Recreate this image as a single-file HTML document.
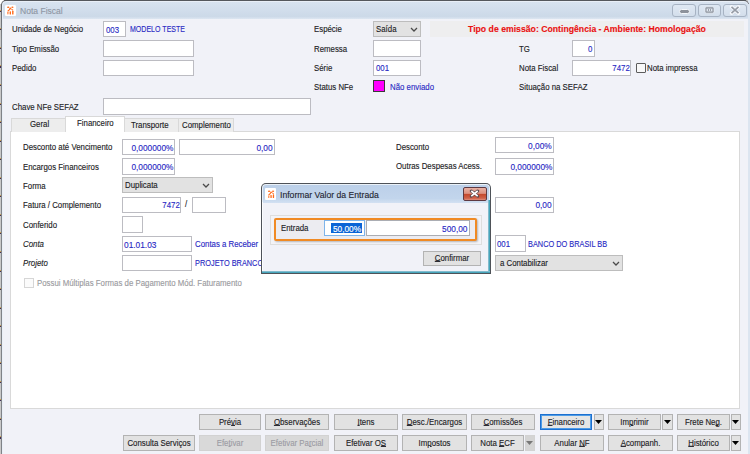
<!DOCTYPE html>
<html><head><meta charset="utf-8">
<style>
*{box-sizing:border-box;margin:0;padding:0}
html,body{width:750px;height:454px;overflow:hidden;background:#f0f0f7;font-family:"Liberation Sans",sans-serif}
.a{position:absolute}
.t{position:absolute;white-space:nowrap;font-family:"Liberation Sans",sans-serif;-webkit-text-stroke:0.12px currentColor}
</style></head><body>
<div class="a" style="left:0px;top:0px;width:750px;height:454px;background:#c9c9c9"></div>
<div class="a" style="left:0px;top:0px;width:4px;height:4px;background:#fff"></div>
<div class="a" style="left:748px;top:0px;width:2px;height:454px;background:#dfe7f1"></div>
<div class="a" style="left:0;top:9.8px;width:1.5px;height:1px;background:#c8a050"></div><div class="a" style="left:0;top:10.8px;width:1.5px;height:1.2px;background:#40305a"></div>
<div class="a" style="left:0;top:28.3px;width:1.5px;height:1px;background:#c8a050"></div><div class="a" style="left:0;top:29.3px;width:1.5px;height:1.2px;background:#40305a"></div>
<div class="a" style="left:0;top:46.8px;width:1.5px;height:1px;background:#c8a050"></div><div class="a" style="left:0;top:47.8px;width:1.5px;height:1.2px;background:#40305a"></div>
<div class="a" style="left:0;top:65.4px;width:1.5px;height:1px;background:#c8a050"></div><div class="a" style="left:0;top:66.4px;width:1.5px;height:1.2px;background:#40305a"></div>
<div class="a" style="left:0;top:84.0px;width:1.5px;height:1px;background:#c8a050"></div><div class="a" style="left:0;top:85.0px;width:1.5px;height:1.2px;background:#40305a"></div>
<div class="a" style="left:0;top:102.5px;width:1.5px;height:1px;background:#c8a050"></div><div class="a" style="left:0;top:103.5px;width:1.5px;height:1.2px;background:#40305a"></div>
<div class="a" style="left:0;top:121.0px;width:1.5px;height:1px;background:#c8a050"></div><div class="a" style="left:0;top:122.0px;width:1.5px;height:1.2px;background:#40305a"></div>
<div class="a" style="left:0;top:139.6px;width:1.5px;height:1px;background:#c8a050"></div><div class="a" style="left:0;top:140.6px;width:1.5px;height:1.2px;background:#40305a"></div>
<div class="a" style="left:0;top:158.2px;width:1.5px;height:1px;background:#c8a050"></div><div class="a" style="left:0;top:159.2px;width:1.5px;height:1.2px;background:#40305a"></div>
<div class="a" style="left:0;top:176.7px;width:1.5px;height:1px;background:#c8a050"></div><div class="a" style="left:0;top:177.7px;width:1.5px;height:1.2px;background:#40305a"></div>
<div class="a" style="left:0;top:195.2px;width:1.5px;height:1px;background:#c8a050"></div><div class="a" style="left:0;top:196.2px;width:1.5px;height:1.2px;background:#40305a"></div>
<div class="a" style="left:0;top:213.8px;width:1.5px;height:1px;background:#c8a050"></div><div class="a" style="left:0;top:214.8px;width:1.5px;height:1.2px;background:#40305a"></div>
<div class="a" style="left:0;top:232.3px;width:1.5px;height:1px;background:#c8a050"></div><div class="a" style="left:0;top:233.3px;width:1.5px;height:1.2px;background:#40305a"></div>
<div class="a" style="left:0;top:250.9px;width:1.5px;height:1px;background:#c8a050"></div><div class="a" style="left:0;top:251.9px;width:1.5px;height:1.2px;background:#40305a"></div>
<div class="a" style="left:0;top:269.5px;width:1.5px;height:1px;background:#c8a050"></div><div class="a" style="left:0;top:270.5px;width:1.5px;height:1.2px;background:#40305a"></div>
<div class="a" style="left:0;top:288.0px;width:1.5px;height:1px;background:#c8a050"></div><div class="a" style="left:0;top:289.0px;width:1.5px;height:1.2px;background:#40305a"></div>
<div class="a" style="left:0;top:306.6px;width:1.5px;height:1px;background:#c8a050"></div><div class="a" style="left:0;top:307.6px;width:1.5px;height:1.2px;background:#40305a"></div>
<div class="a" style="left:0;top:325.1px;width:1.5px;height:1px;background:#c8a050"></div><div class="a" style="left:0;top:326.1px;width:1.5px;height:1.2px;background:#40305a"></div>
<div class="a" style="left:0;top:343.6px;width:1.5px;height:1px;background:#c8a050"></div><div class="a" style="left:0;top:344.6px;width:1.5px;height:1.2px;background:#40305a"></div>
<div class="a" style="left:0;top:362.2px;width:1.5px;height:1px;background:#c8a050"></div><div class="a" style="left:0;top:363.2px;width:1.5px;height:1.2px;background:#40305a"></div>
<div class="a" style="left:0;top:380.8px;width:1.5px;height:1px;background:#c8a050"></div><div class="a" style="left:0;top:381.8px;width:1.5px;height:1.2px;background:#40305a"></div>
<div class="a" style="left:0;top:399.3px;width:1.5px;height:1px;background:#c8a050"></div><div class="a" style="left:0;top:400.3px;width:1.5px;height:1.2px;background:#40305a"></div>
<div class="a" style="left:0;top:417.9px;width:1.5px;height:1px;background:#c8a050"></div><div class="a" style="left:0;top:418.9px;width:1.5px;height:1.2px;background:#40305a"></div>
<div class="a" style="left:0;top:436.4px;width:1.5px;height:1px;background:#c8a050"></div><div class="a" style="left:0;top:437.4px;width:1.5px;height:1.2px;background:#40305a"></div>
<div class="a" style="left:1px;top:0px;width:748px;height:454px;background:linear-gradient(#5c5f64,#6a6d72 12px,#808388 40px);border-radius:5px 5px 0 0"></div>
<div class="a" style="left:4px;top:0px;width:742px;height:1px;background:#55585d"></div>
<div class="a" style="left:2px;top:1px;width:746px;height:453px;background:#e9eff7;border-radius:4px 4px 0 0"></div>
<div class="a" style="left:748px;top:4px;width:2px;height:450px;background:#dce5f0"></div>
<div class="a" style="left:3px;top:2px;width:745px;height:452px;background:#f1f2f8;border-radius:3px 3px 0 0"></div>
<div class="a" style="left:3px;top:2px;width:745px;height:17px;background:linear-gradient(#d8e3f0,#ccd9e8 85%,#dde6f1);border-radius:3px 3px 0 0"></div>
<div class="a" style="left:5px;top:5px;width:11px;height:11px;background:#fff;border-radius:1.5px;box-shadow:0 0 1px rgba(255,255,255,.8)"></div>
<svg class="a" style="left:5px;top:5px" width="11" height="11" viewBox="0 0 11 11"><g fill="#ff6a1a"><ellipse cx="3.2" cy="2.3" rx="1.2" ry="0.8"/><ellipse cx="7.4" cy="2.3" rx="1.1" ry="0.8"/><ellipse cx="5.3" cy="3.4" rx="1" ry="0.9"/><path d="M4.6 3.8 L2.2 6 L3.4 6.6 L5.4 4.6Z"/><path d="M6 4.2 L7.8 5.6 L8.3 4.8 L6.6 3.7Z"/><rect x="2.2" y="6.6" width="1.4" height="2.8" rx="0.6" fill-opacity=".75"/><rect x="4.6" y="6.2" width="1.4" height="3.3" rx="0.6"/><rect x="7.1" y="5.6" width="1.4" height="3.9" rx="0.6"/></g></svg>
<span class="t" style="left:19.50px;top:6.60px;font-size:9px;line-height:9px;color:#8e96a4;transform:scaleX(0.95);transform-origin:0 0;">Nota Fiscal</span>
<div class="a" style="left:672px;top:4px;width:24px;height:13px;background:linear-gradient(#dfe8f3,#d3deeb);border:1px solid #a7b3c3;border-radius:3px"></div>
<div class="a" style="left:698px;top:4px;width:23px;height:13px;background:linear-gradient(#dfe8f3,#d3deeb);border:1px solid #a7b3c3;border-radius:3px"></div>
<div class="a" style="left:723px;top:4px;width:24px;height:13px;background:linear-gradient(#dfe8f3,#d3deeb);border:1px solid #a7b3c3;border-radius:3px"></div>
<svg class="a" style="left:678px;top:8px" width="13" height="7" viewBox="0 0 13 7"><rect x="1.5" y="1.5" width="10" height="4" rx="2" fill="#8d929b" stroke="#f4f7fb" stroke-width="1"/></svg>
<svg class="a" style="left:704px;top:6px" width="11" height="8" viewBox="0 0 11 8"><rect x="1" y="0.8" width="9" height="6.4" rx="1.6" fill="#939aa4" stroke="#eef2f8" stroke-width="0.6"/><rect x="2.6" y="2.6" width="5.8" height="2.8" fill="#dfe5ee"/><rect x="4" y="3.4" width="1" height="1.2" fill="#707580"/><rect x="6" y="3.4" width="1" height="1.2" fill="#707580"/></svg>
<svg class="a" style="left:729px;top:5px" width="12" height="10" viewBox="0 0 12 10"><path d="M2.5 1.8 L9.5 8.2 M9.5 1.8 L2.5 8.2" stroke="#f6f8fb" stroke-width="3.4" stroke-linecap="round"/><path d="M2.5 1.8 L9.5 8.2 M9.5 1.8 L2.5 8.2" stroke="#959ba5" stroke-width="1.6"/></svg>
<span class="t" style="left:12.00px;top:25.00px;font-size:8.0px;line-height:8.0px;color:#1c1c24;transform:scale(0.98,1.13);transform-origin:0 0;">Unidade de Negócio</span>
<div class="a" style="left:103px;top:21px;width:23px;height:16px;background:#fff;border:1px solid #bcbcc2;"></div>
<span class="t" style="left:105.60px;top:25.50px;font-size:8.0px;line-height:8.0px;color:#2a2ac4;transform:scale(0.98,1.13);transform-origin:0 0;">003</span>
<span class="t" style="left:130.00px;top:25.00px;font-size:8.0px;line-height:8.0px;color:#2a2ac4;transform:scale(0.88,1.13);transform-origin:0 0;">MODELO TESTE</span>
<span class="t" style="left:12.00px;top:44.60px;font-size:8.0px;line-height:8.0px;color:#1c1c24;transform:scale(0.98,1.13);transform-origin:0 0;">Tipo Emissão</span>
<div class="a" style="left:103px;top:40px;width:91px;height:17px;background:#fff;border:1px solid #bcbcc2;"></div>
<span class="t" style="left:12.00px;top:64.00px;font-size:8.0px;line-height:8.0px;color:#1c1c24;transform:scale(0.98,1.13);transform-origin:0 0;">Pedido</span>
<div class="a" style="left:103px;top:60px;width:91px;height:16px;background:#fff;border:1px solid #bcbcc2;"></div>
<span class="t" style="left:12.00px;top:102.75px;font-size:8.0px;line-height:8.0px;color:#1c1c24;transform:scale(0.98,1.13);transform-origin:0 0;">Chave NFe SEFAZ</span>
<div class="a" style="left:103px;top:98px;width:208px;height:17px;background:#fff;border:1px solid #bcbcc2;"></div>
<span class="t" style="left:314.00px;top:25.00px;font-size:8.0px;line-height:8.0px;color:#1c1c24;transform:scale(0.98,1.13);transform-origin:0 0;">Espécie</span>
<div class="a" style="left:373px;top:21px;width:48px;height:16px;background:#e2e2e2;border:1px solid #bdbdbd;"></div>
<span class="t" style="left:375.80px;top:25.00px;font-size:8.0px;line-height:8.0px;color:#1c1c24;transform:scale(0.98,1.13);transform-origin:0 0;">Saída</span>
<svg class="a" style="left:410.2px;top:26.7px" width="8" height="5.0"><polyline points="1,1 4.0,4.0 7,1" fill="none" stroke="#4a4a4a" stroke-width="1.25"/></svg>
<span class="t" style="left:314.00px;top:44.60px;font-size:8.0px;line-height:8.0px;color:#1c1c24;transform:scale(0.98,1.13);transform-origin:0 0;">Remessa</span>
<div class="a" style="left:373px;top:40px;width:48px;height:17px;background:#fff;border:1px solid #bcbcc2;"></div>
<span class="t" style="left:314.00px;top:64.00px;font-size:8.0px;line-height:8.0px;color:#1c1c24;transform:scale(0.98,1.13);transform-origin:0 0;">Série</span>
<div class="a" style="left:373px;top:60px;width:48px;height:16px;background:#fff;border:1px solid #bcbcc2;"></div>
<span class="t" style="left:375.80px;top:64.20px;font-size:8.0px;line-height:8.0px;color:#2a2ac4;transform:scale(0.98,1.13);transform-origin:0 0;">001</span>
<span class="t" style="left:314.00px;top:83.00px;font-size:8.0px;line-height:8.0px;color:#1c1c24;transform:scale(0.98,1.13);transform-origin:0 0;">Status NFe</span>
<div class="a" style="left:373px;top:80px;width:12px;height:12px;background:#ff00ff;border:1px solid #3a3a3a"></div>
<span class="t" style="left:389.50px;top:83.00px;font-size:8.0px;line-height:8.0px;color:#2a2ac4;transform:scale(0.98,1.13);transform-origin:0 0;">Não enviado</span>
<div class="a" style="left:430px;top:21px;width:314px;height:16px;background:#eeeeef"></div>
<span class="t" style="left:467.60px;top:25.00px;font-size:9px;line-height:9px;color:#ea1010;transform:scaleX(0.965);transform-origin:0 0;font-weight:bold">Tipo de emissão: Contingência - Ambiente: Homologação</span>
<span class="t" style="left:519.30px;top:44.60px;font-size:8.0px;line-height:8.0px;color:#1c1c24;transform:scale(0.98,1.13);transform-origin:0 0;">TG</span>
<div class="a" style="left:572px;top:40px;width:23px;height:17px;background:#fff;border:1px solid #bcbcc2;"></div>
<span class="t" style="right:157.80px;top:44.50px;font-size:8.0px;line-height:8.0px;color:#2a2ac4;transform:scale(0.98,1.13);transform-origin:100% 0;">0</span>
<span class="t" style="left:519.30px;top:64.00px;font-size:8.0px;line-height:8.0px;color:#1c1c24;transform:scale(0.98,1.13);transform-origin:0 0;">Nota Fiscal</span>
<div class="a" style="left:572px;top:60px;width:59px;height:16px;background:#fff;border:1px solid #bcbcc2;"></div>
<span class="t" style="right:120.70px;top:64.00px;font-size:8.0px;line-height:8.0px;color:#2a2ac4;transform:scale(0.98,1.13);transform-origin:100% 0;">7472</span>
<div class="a" style="left:636px;top:63px;width:10px;height:10px;background:#f8f8f8;border:1px solid #5c5c5c;border-radius:1px"></div>
<span class="t" style="left:646.50px;top:64.00px;font-size:8.0px;line-height:8.0px;color:#1c1c24;transform:scale(0.98,1.13);transform-origin:0 0;">Nota impressa</span>
<span class="t" style="left:519.30px;top:82.70px;font-size:8.0px;line-height:8.0px;color:#1c1c24;transform:scale(0.98,1.13);transform-origin:0 0;">Situação na SEFAZ</span>
<div class="a" style="left:10px;top:131px;width:730px;height:278px;background:#fff;border:1px solid #d9d9d9"></div>
<div class="a" style="left:11px;top:118px;width:55px;height:14px;background:#ededed;border:1px solid #d9d9d9;border-bottom:none"></div>
<span class="t" style="left:29.70px;top:120.30px;font-size:8.0px;line-height:8.0px;color:#1c1c24;transform:scale(0.98,1.13);transform-origin:0 0;">Geral</span>
<div class="a" style="left:124px;top:118px;width:55px;height:14px;background:#ededed;border:1px solid #d9d9d9;border-bottom:none"></div>
<span class="t" style="left:130.80px;top:120.80px;font-size:8.0px;line-height:8.0px;color:#1c1c24;transform:scale(0.98,1.13);transform-origin:0 0;">Transporte</span>
<div class="a" style="left:178px;top:118px;width:56px;height:14px;background:#ededed;border:1px solid #d9d9d9;border-bottom:none"></div>
<span class="t" style="left:182.00px;top:120.80px;font-size:8.0px;line-height:8.0px;color:#1c1c24;transform:scale(0.98,1.13);transform-origin:0 0;">Complemento</span>
<div class="a" style="left:65px;top:116px;width:60px;height:16px;background:#fff;border:1px solid #d9d9d9;border-bottom:none"></div>
<span class="t" style="left:76.70px;top:118.70px;font-size:8.0px;line-height:8.0px;color:#1c1c24;transform:scale(0.98,1.13);transform-origin:0 0;">Financeiro</span>
<span class="t" style="left:23.00px;top:143.00px;font-size:8.0px;line-height:8.0px;color:#1c1c24;transform:scale(0.98,1.13);transform-origin:0 0;">Desconto até Vencimento</span>
<div class="a" style="left:122px;top:139px;width:53px;height:16px;background:#fff;border:1px solid #bcbcc2;"></div>
<span class="t" style="right:576.90px;top:143.50px;font-size:8.0px;line-height:8.0px;color:#2a2ac4;transform:scale(1.04,1.13);transform-origin:100% 0;">0,000000%</span>
<div class="a" style="left:179px;top:139px;width:96px;height:16px;background:#fff;border:1px solid #bcbcc2;"></div>
<span class="t" style="right:477.70px;top:143.50px;font-size:8.0px;line-height:8.0px;color:#2a2ac4;transform:scale(1.04,1.13);transform-origin:100% 0;">0,00</span>
<span class="t" style="left:23.00px;top:162.50px;font-size:8.0px;line-height:8.0px;color:#1c1c24;transform:scale(0.98,1.13);transform-origin:0 0;">Encargos Financeiros</span>
<div class="a" style="left:122px;top:158px;width:53px;height:17px;background:#fff;border:1px solid #bcbcc2;"></div>
<span class="t" style="right:576.90px;top:163.00px;font-size:8.0px;line-height:8.0px;color:#2a2ac4;transform:scale(1.04,1.13);transform-origin:100% 0;">0,000000%</span>
<span class="t" style="left:23.00px;top:182.00px;font-size:8.0px;line-height:8.0px;color:#1c1c24;transform:scale(0.98,1.13);transform-origin:0 0;">Forma</span>
<div class="a" style="left:122px;top:177px;width:91px;height:16px;background:#e2e2e2;border:1px solid #bdbdbd;"></div>
<span class="t" style="left:124.70px;top:181.30px;font-size:8.0px;line-height:8.0px;color:#1c1c24;transform:scale(0.98,1.13);transform-origin:0 0;">Duplicata</span>
<svg class="a" style="left:202.2px;top:182.7px" width="8" height="5.0"><polyline points="1,1 4.0,4.0 7,1" fill="none" stroke="#4a4a4a" stroke-width="1.25"/></svg>
<span class="t" style="left:23.00px;top:201.30px;font-size:8.0px;line-height:8.0px;color:#1c1c24;transform:scale(0.98,1.13);transform-origin:0 0;">Fatura / Complemento</span>
<div class="a" style="left:122px;top:197px;width:59px;height:16px;background:#fff;border:1px solid #bcbcc2;"></div>
<span class="t" style="right:570.70px;top:201.00px;font-size:8.0px;line-height:8.0px;color:#2a2ac4;transform:scale(0.98,1.13);transform-origin:100% 0;">7472</span>
<span class="t" style="left:185.30px;top:200.00px;font-size:8.0px;line-height:8.0px;color:#1c1c24;transform:scale(0.98,1.13);transform-origin:0 0;">/</span>
<div class="a" style="left:192px;top:197px;width:34px;height:16px;background:#fff;border:1px solid #bcbcc2;"></div>
<span class="t" style="left:23.00px;top:220.50px;font-size:8.0px;line-height:8.0px;color:#1c1c24;transform:scale(0.98,1.13);transform-origin:0 0;">Conferido</span>
<div class="a" style="left:122px;top:216px;width:21px;height:17px;background:#fff;border:1px solid #bcbcc2;"></div>
<span class="t" style="left:23.00px;top:239.80px;font-size:8.0px;line-height:8.0px;color:#1c1c24;transform:scale(0.98,1.13);transform-origin:0 0;font-style:italic">Conta</span>
<div class="a" style="left:122px;top:236px;width:70px;height:16px;background:#fff;border:1px solid #bcbcc2;"></div>
<span class="t" style="left:124.00px;top:240.60px;font-size:8.0px;line-height:8.0px;color:#2a2ac4;transform:scale(1.04,1.13);transform-origin:0 0;">01.01.03</span>
<span class="t" style="left:195.00px;top:240.00px;font-size:8.0px;line-height:8.0px;color:#2a2ac4;transform:scale(0.98,1.13);transform-origin:0 0;">Contas a Receber</span>
<span class="t" style="left:23.00px;top:259.20px;font-size:8.0px;line-height:8.0px;color:#1c1c24;transform:scale(0.98,1.13);transform-origin:0 0;font-style:italic">Projeto</span>
<div class="a" style="left:122px;top:255px;width:70px;height:16px;background:#fff;border:1px solid #bcbcc2;"></div>
<span class="t" style="left:195.00px;top:259.20px;font-size:8.0px;line-height:8.0px;color:#2a2ac4;transform:scale(0.92,1.13);transform-origin:0 0;">PROJETO BRANCO</span>
<div class="a" style="left:24px;top:278px;width:10px;height:10px;background:#fbfbfb;border:1px solid #d6d6d6"></div>
<span class="t" style="left:36.90px;top:279.10px;font-size:8.0px;line-height:8.0px;color:#9a9a9e;transform:scale(0.98,1.13);transform-origin:0 0;">Possui Múltiplas Formas de Pagamento Mód. Faturamento</span>
<span class="t" style="left:396.00px;top:142.50px;font-size:8.0px;line-height:8.0px;color:#1c1c24;transform:scale(0.98,1.13);transform-origin:0 0;">Desconto</span>
<div class="a" style="left:495px;top:137px;width:59px;height:16px;background:#fff;border:1px solid #bcbcc2;"></div>
<span class="t" style="right:198.00px;top:142.20px;font-size:8.0px;line-height:8.0px;color:#2a2ac4;transform:scale(1.04,1.13);transform-origin:100% 0;">0,00%</span>
<span class="t" style="left:396.00px;top:162.00px;font-size:8.0px;line-height:8.0px;color:#1c1c24;transform:scale(0.98,1.13);transform-origin:0 0;">Outras Despesas Acess.</span>
<div class="a" style="left:495px;top:158px;width:59px;height:17px;background:#fff;border:1px solid #bcbcc2;"></div>
<span class="t" style="right:198.00px;top:162.50px;font-size:8.0px;line-height:8.0px;color:#2a2ac4;transform:scale(1.04,1.13);transform-origin:100% 0;">0,000000%</span>
<div class="a" style="left:495px;top:197px;width:59px;height:16px;background:#fff;border:1px solid #bcbcc2;"></div>
<span class="t" style="right:198.00px;top:201.30px;font-size:8.0px;line-height:8.0px;color:#2a2ac4;transform:scale(1.04,1.13);transform-origin:100% 0;">0,00</span>
<div class="a" style="left:495px;top:235px;width:31px;height:17px;background:#fff;border:1px solid #bcbcc2;"></div>
<span class="t" style="left:496.70px;top:240.40px;font-size:8.0px;line-height:8.0px;color:#2a2ac4;transform:scale(0.98,1.13);transform-origin:0 0;">001</span>
<span class="t" style="left:528.30px;top:239.60px;font-size:8.0px;line-height:8.0px;color:#2a2ac4;transform:scale(0.92,1.13);transform-origin:0 0;">BANCO DO BRASIL BB</span>
<div class="a" style="left:495px;top:255px;width:128px;height:16px;background:#e2e2e2;border:1px solid #bdbdbd;"></div>
<span class="t" style="left:500.00px;top:258.80px;font-size:8.0px;line-height:8.0px;color:#1c1c24;transform:scale(0.98,1.13);transform-origin:0 0;">a Contabilizar</span>
<svg class="a" style="left:612.2px;top:260.7px" width="8" height="5.0"><polyline points="1,1 4.0,4.0 7,1" fill="none" stroke="#4a4a4a" stroke-width="1.25"/></svg>
<div class="a" style="left:261px;top:183px;width:230px;height:91px;background:#4e5258;border-radius:5px 5px 0 0"></div>
<div class="a" style="left:262px;top:184px;width:228px;height:89px;background:#eaf1f8;border-radius:4px 4px 0 0"></div>
<div class="a" style="left:263px;top:185px;width:226px;height:18px;background:linear-gradient(#bcd0e9,#c2d5ec 75%,#d3e1f2);border-radius:3px 3px 0 0"></div>
<div class="a" style="left:263px;top:203px;width:226px;height:69px;background:#f1f2f8"></div>
<div class="a" style="left:488px;top:200px;width:2px;height:73px;background:linear-gradient(90deg,#9fc6d8,#2a9ab0)"></div>
<div class="a" style="left:262px;top:271px;width:228px;height:2px;background:linear-gradient(#9fc6d8,#2a9ab0)"></div>
<div class="a" style="left:262px;top:202px;width:1px;height:69px;background:#fbfdff"></div>
<div class="a" style="left:265px;top:188px;width:11px;height:12px;background:#fff;border-radius:1px"></div>
<svg class="a" style="left:265.5px;top:189px" width="10.5" height="10.5" viewBox="0 0 11 11"><g fill="#ff6a1a"><ellipse cx="3.2" cy="2.3" rx="1.2" ry="0.8"/><ellipse cx="7.4" cy="2.3" rx="1.1" ry="0.8"/><ellipse cx="5.3" cy="3.4" rx="1" ry="0.9"/><path d="M4.6 3.8 L2.2 6 L3.4 6.6 L5.4 4.6Z"/><path d="M6 4.2 L7.8 5.6 L8.3 4.8 L6.6 3.7Z"/><rect x="2.2" y="6.6" width="1.4" height="2.8" rx="0.6" fill-opacity=".75"/><rect x="4.6" y="6.2" width="1.4" height="3.3" rx="0.6"/><rect x="7.1" y="5.6" width="1.4" height="3.9" rx="0.6"/></g></svg>
<span class="t" style="left:279.70px;top:190.01px;font-size:9.5px;line-height:9.5px;color:#1e2430;transform:scaleX(0.91);transform-origin:0 0;">Informar Valor da Entrada</span>
<div class="a" style="left:463px;top:187px;width:24px;height:14px;background:linear-gradient(#eab2a4,#dc9080 45%,#c4482c 52%,#cf6048 85%,#e09080);border:1px solid #5e3a42;border-radius:2px"></div>
<svg class="a" style="left:469px;top:189px" width="11" height="9" viewBox="0 0 11 9"><path d="M2.3 2 L8.7 7.2 M8.7 2 L2.3 7.2" stroke="#5a4a50" stroke-width="3" stroke-linecap="round"/><path d="M2.3 2 L8.7 7.2 M8.7 2 L2.3 7.2" stroke="#fff" stroke-width="1.7"/></svg>
<div class="a" style="left:270px;top:215px;width:212px;height:30px;background:#f3f3f7;border:1px solid #dedede"></div>
<div class="a" style="left:274px;top:218px;width:203px;height:23px;background:#ececf1;border:2px solid #f08a24;border-radius:2px;box-shadow:1px 1px 2px rgba(0,0,0,.25)"></div>
<span class="t" style="left:280.80px;top:224.10px;font-size:8.0px;line-height:8.0px;color:#1c1c24;transform:scale(0.98,1.13);transform-origin:0 0;">Entrada</span>
<div class="a" style="left:324px;top:220px;width:41px;height:16px;background:#fff;border:1px solid #7eb4ea"></div>
<div class="a" style="left:331px;top:223px;width:31px;height:10px;background:#0a64d6"></div>
<span class="t" style="right:388.50px;top:225.00px;font-size:8.0px;line-height:8.0px;color:#fff;transform:scale(1.04,1.13);transform-origin:100% 0;">50,00%</span>
<div class="a" style="left:366px;top:220px;width:104px;height:16px;background:#fff;border:1px solid #abadb3"></div>
<span class="t" style="right:282.40px;top:225.00px;font-size:8.0px;line-height:8.0px;color:#2a2ac4;transform:scale(1.04,1.13);transform-origin:100% 0;">500,00</span>
<div class="a" style="left:423px;top:251px;width:58px;height:15px;background:#e2e2e2;border:1px solid #b3b3b3;"></div>
<span class="t" style="left:423px;width:58px;text-align:center;top:254.20px;font-size:8.0px;line-height:8.0px;color:#1c1c24;transform:scale(0.98,1.13);transform-origin:50% 0"><u style="text-decoration-thickness:1px;text-underline-offset:0px">C</u>onfirmar</span>
<div class="a" style="left:199px;top:414px;width:62px;height:16px;background:#e2e2e2;border:1px solid #b3b3b3;"></div>
<span class="t" style="left:199px;width:62px;text-align:center;top:417.50px;font-size:8.0px;line-height:8.0px;color:#1c1c24;transform:scale(0.98,1.13);transform-origin:50% 0">Pré<u style="text-decoration-thickness:1px;text-underline-offset:0px">v</u>ia</span>
<div class="a" style="left:265px;top:414px;width:64px;height:16px;background:#e2e2e2;border:1px solid #b3b3b3;"></div>
<span class="t" style="left:265px;width:64px;text-align:center;top:417.50px;font-size:8.0px;line-height:8.0px;color:#1c1c24;transform:scale(0.98,1.13);transform-origin:50% 0"><u style="text-decoration-thickness:1px;text-underline-offset:0px">O</u>bservações</span>
<div class="a" style="left:334px;top:414px;width:64px;height:16px;background:#e2e2e2;border:1px solid #b3b3b3;"></div>
<span class="t" style="left:334px;width:64px;text-align:center;top:417.50px;font-size:8.0px;line-height:8.0px;color:#1c1c24;transform:scale(0.98,1.13);transform-origin:50% 0"><u style="text-decoration-thickness:1px;text-underline-offset:0px">I</u>tens</span>
<div class="a" style="left:402px;top:414px;width:65px;height:16px;background:#e2e2e2;border:1px solid #b3b3b3;"></div>
<span class="t" style="left:402px;width:65px;text-align:center;top:417.50px;font-size:8.0px;line-height:8.0px;color:#1c1c24;transform:scale(0.98,1.13);transform-origin:50% 0"><u style="text-decoration-thickness:1px;text-underline-offset:0px">D</u>esc./Encargos</span>
<div class="a" style="left:471px;top:414px;width:64px;height:16px;background:#e2e2e2;border:1px solid #b3b3b3;"></div>
<span class="t" style="left:471px;width:64px;text-align:center;top:417.50px;font-size:8.0px;line-height:8.0px;color:#1c1c24;transform:scale(0.98,1.13);transform-origin:50% 0"><u style="text-decoration-thickness:1px;text-underline-offset:0px">C</u>omissões</span>
<div class="a" style="left:540px;top:414px;width:52px;height:16px;background:#e5e5e5;border:1px solid #1c6fcf;box-shadow:inset 0 0 0 1px #4d9be6;"></div>
<span class="t" style="left:540px;width:52px;text-align:center;top:417.50px;font-size:8.0px;line-height:8.0px;color:#1c1c24;transform:scale(0.98,1.13);transform-origin:50% 0"><u style="text-decoration-thickness:1px;text-underline-offset:0px">F</u>inanceiro</span>
<div class="a" style="left:608px;top:414px;width:53px;height:16px;background:#e2e2e2;border:1px solid #b3b3b3;"></div>
<span class="t" style="left:608px;width:53px;text-align:center;top:417.50px;font-size:8.0px;line-height:8.0px;color:#1c1c24;transform:scale(0.98,1.13);transform-origin:50% 0">Im<u style="text-decoration-thickness:1px;text-underline-offset:0px">p</u>rimir</span>
<div class="a" style="left:677px;top:414px;width:53px;height:16px;background:#e2e2e2;border:1px solid #b3b3b3;"></div>
<span class="t" style="left:677px;width:53px;text-align:center;top:417.50px;font-size:8.0px;line-height:8.0px;color:#1c1c24;transform:scale(0.98,1.13);transform-origin:50% 0">Frete Ne<u style="text-decoration-thickness:1px;text-underline-offset:0px">g</u>.</span>
<div class="a" style="left:594px;top:414px;width:10px;height:16px;background:#e2e2e2;border:1px solid #b3b3b3;"></div>
<svg class="a" style="left:595.0px;top:420.3px" width="7" height="4.0"><polygon points="0,0 7,0 3.5,4.0" fill="#000"/></svg>
<div class="a" style="left:662px;top:414px;width:11px;height:16px;background:#e2e2e2;border:1px solid #b3b3b3;"></div>
<svg class="a" style="left:663.5px;top:420.3px" width="7" height="4.0"><polygon points="0,0 7,0 3.5,4.0" fill="#000"/></svg>
<div class="a" style="left:731px;top:414px;width:10px;height:16px;background:#e2e2e2;border:1px solid #b3b3b3;"></div>
<svg class="a" style="left:732.0px;top:420.3px" width="7" height="4.0"><polygon points="0,0 7,0 3.5,4.0" fill="#000"/></svg>
<div class="a" style="left:123px;top:435px;width:72px;height:16px;background:#e2e2e2;border:1px solid #b3b3b3;"></div>
<span class="t" style="left:123px;width:72px;text-align:center;top:438.50px;font-size:8.0px;line-height:8.0px;color:#1c1c24;transform:scale(0.98,1.13);transform-origin:50% 0">Consulta Serviços</span>
<div class="a" style="left:199px;top:435px;width:62px;height:16px;background:#d9d9d9;border:1px solid #d2d2d2;"></div>
<span class="t" style="left:199px;width:62px;text-align:center;top:438.50px;font-size:8.0px;line-height:8.0px;color:#9c9ca4;transform:scale(0.98,1.13);transform-origin:50% 0">Efe<u style="text-decoration-thickness:1px;text-underline-offset:0px">t</u>ivar</span>
<div class="a" style="left:265px;top:435px;width:64px;height:16px;background:#d9d9d9;border:1px solid #d2d2d2;"></div>
<span class="t" style="left:265px;width:64px;text-align:center;top:438.50px;font-size:8.0px;line-height:8.0px;color:#9c9ca4;transform:scale(0.98,1.13);transform-origin:50% 0">Efetivar Pa<u style="text-decoration-thickness:1px;text-underline-offset:0px">r</u>cial</span>
<div class="a" style="left:334px;top:435px;width:64px;height:16px;background:#e2e2e2;border:1px solid #b3b3b3;"></div>
<span class="t" style="left:334px;width:64px;text-align:center;top:438.50px;font-size:8.0px;line-height:8.0px;color:#1c1c24;transform:scale(0.98,1.13);transform-origin:50% 0">Efetivar O<u style="text-decoration-thickness:1px;text-underline-offset:0px">S</u></span>
<div class="a" style="left:402px;top:435px;width:65px;height:16px;background:#e2e2e2;border:1px solid #b3b3b3;"></div>
<span class="t" style="left:402px;width:65px;text-align:center;top:438.50px;font-size:8.0px;line-height:8.0px;color:#1c1c24;transform:scale(0.98,1.13);transform-origin:50% 0">Im<u style="text-decoration-thickness:1px;text-underline-offset:0px">p</u>ostos</span>
<div class="a" style="left:471px;top:435px;width:53px;height:16px;background:#e2e2e2;border:1px solid #b3b3b3;"></div>
<span class="t" style="left:471px;width:53px;text-align:center;top:438.50px;font-size:8.0px;line-height:8.0px;color:#1c1c24;transform:scale(0.98,1.13);transform-origin:50% 0">Nota <u style="text-decoration-thickness:1px;text-underline-offset:0px">E</u>CF</span>
<div class="a" style="left:540px;top:435px;width:64px;height:16px;background:#e2e2e2;border:1px solid #b3b3b3;"></div>
<span class="t" style="left:540px;width:64px;text-align:center;top:438.50px;font-size:8.0px;line-height:8.0px;color:#1c1c24;transform:scale(0.98,1.13);transform-origin:50% 0">Anular <u style="text-decoration-thickness:1px;text-underline-offset:0px">N</u>F</span>
<div class="a" style="left:608px;top:435px;width:65px;height:16px;background:#e2e2e2;border:1px solid #b3b3b3;"></div>
<span class="t" style="left:608px;width:65px;text-align:center;top:438.50px;font-size:8.0px;line-height:8.0px;color:#1c1c24;transform:scale(0.98,1.13);transform-origin:50% 0"><u style="text-decoration-thickness:1px;text-underline-offset:0px">A</u>companh.</span>
<div class="a" style="left:677px;top:435px;width:53px;height:16px;background:#e2e2e2;border:1px solid #b3b3b3;"></div>
<span class="t" style="left:677px;width:53px;text-align:center;top:438.50px;font-size:8.0px;line-height:8.0px;color:#1c1c24;transform:scale(0.98,1.13);transform-origin:50% 0"><u style="text-decoration-thickness:1px;text-underline-offset:0px">H</u>istórico</span>
<div class="a" style="left:525px;top:435px;width:10px;height:16px;background:#d4d4d4;border:1px solid #d2d2d2;"></div>
<svg class="a" style="left:526.0px;top:441.3px" width="7" height="4.0"><polygon points="0,0 7,0 3.5,4.0" fill="#777"/></svg>
<div class="a" style="left:731px;top:435px;width:10px;height:16px;background:#e2e2e2;border:1px solid #b3b3b3;"></div>
<svg class="a" style="left:732.0px;top:441.3px" width="7" height="4.0"><polygon points="0,0 7,0 3.5,4.0" fill="#000"/></svg>
</body></html>
